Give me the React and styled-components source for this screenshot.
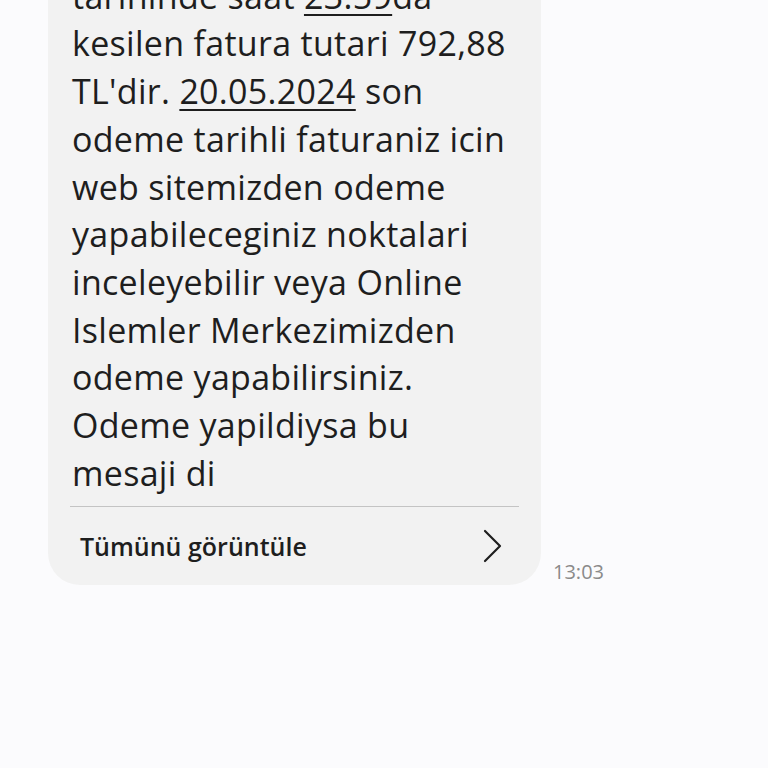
import React from "react";
import styled, { createGlobalStyle } from "styled-components";

const GlobalStyle = createGlobalStyle`
  html, body {
    margin: 0;
    padding: 0;
    background: #fbfbfd;
  }
  body {
    font-family: "Open Sans", Roboto, "Liberation Sans", sans-serif;
    -webkit-font-smoothing: antialiased;
  }
`;

const lines = [
  ["Sayin abonemiz, 04.2024 donemine"],
  ["ait ", { u: "05.05.2024" }],
  ["tarihinde saat ", { u: "23:59" }, "da"],
  ["kesilen fatura tutari 792,88"],
  ["TL'dir. ", { u: "20.05.2024" }, " son"],
  ["odeme tarihli faturaniz icin"],
  ["web sitemizden odeme"],
  ["yapabileceginiz noktalari"],
  ["inceleyebilir veya Online"],
  ["Islemler Merkezimizden"],
  ["odeme yapabilirsiniz."],
  ["Odeme yapildiysa bu"],
  ["mesaji di"],
];

export default function App() {
  return (
    <>
      <GlobalStyle />
      <Screen>
        <MessageRow>
          <Bubble>
            <Body>
              {lines.map((parts, i) => (
                <Line key={i}>
                  {parts.map((p, j) =>
                    typeof p === "string" ? p : <Link key={j}>{p.u}</Link>
                  )}
                </Line>
              ))}
            </Body>
            <Divider />
            <ShowAll>
              <span>Tümünü görüntüle</span>
              <svg width="22" height="34" viewBox="0 0 22 34" fill="none">
                <path
                  d="M4 2 L19 17 L4 32"
                  stroke="#1f1f1f"
                  strokeWidth="2.2"
                  strokeLinecap="round"
                  strokeLinejoin="round"
                />
              </svg>
            </ShowAll>
          </Bubble>
          <Time>13:03</Time>
        </MessageRow>
      </Screen>
    </>
  );
}

const Screen = styled.div`
  height: 100vh;
  overflow: hidden;
  display: flex;
  flex-direction: column;
  justify-content: flex-end;
  padding: 0 0 183px 48px;
  box-sizing: border-box;
`;

const MessageRow = styled.div`
  display: flex;
  align-items: flex-end;
  gap: 12px;
`;

const Bubble = styled.div`
  width: 493px;
  background: #f2f2f2;
  border-radius: 32px;
  box-sizing: border-box;
  padding: 0 22px 0 22px;
  flex-shrink: 0;
`;

const Body = styled.div`
  padding: 18px 0 8px 2px;
  color: #1e1e1e;
  font-size: 34px;
  line-height: 47.7px;
  letter-spacing: 0.3px;
`;

const Line = styled.div`
  white-space: nowrap;
`;

const Link = styled.span`
  text-decoration: underline;
  text-decoration-thickness: 2px;
  text-underline-offset: 5px;
`;

const Divider = styled.div`
  height: 1.5px;
  background: #c4c4c4;
`;

const ShowAll = styled.div`
  display: flex;
  align-items: center;
  justify-content: space-between;
  height: 78px;
  padding: 0 16px 0 10px;
  font-size: 25px;
  font-weight: 600;
  color: #1e1e1e;
`;

const Time = styled.div`
  font-size: 20px;
  color: #8a8a8a;
  padding-bottom: 1px;
  line-height: 24px;
`;
